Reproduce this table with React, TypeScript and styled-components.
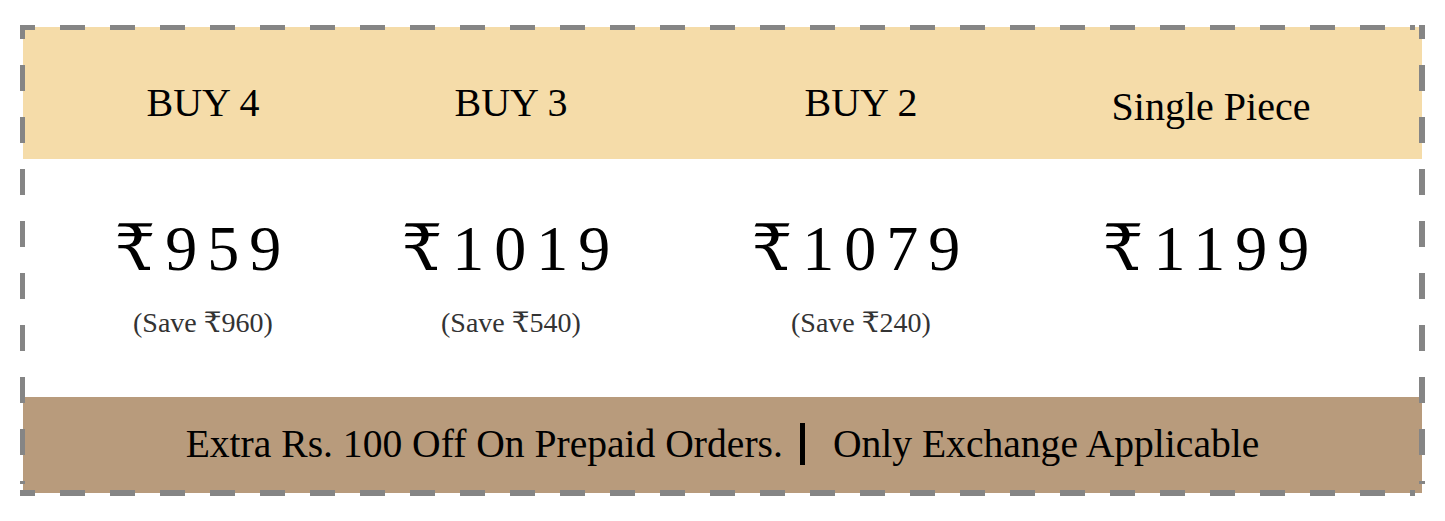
import React from 'react';
import styled, { createGlobalStyle } from 'styled-components';

const offers = [
  { id: '4', title: 'BUY 4', price: '₹959', save: '(Save ₹960)', shift: 0 },
  { id: '3', title: 'BUY 3', price: '₹1019', save: '(Save ₹540)', shift: 0 },
  { id: '2', title: 'BUY 2', price: '₹1079', save: '(Save ₹240)', shift: 0 },
  { id: '1', title: 'Single Piece', price: '₹1199', save: '', shift: 4 },
];

function App() {
  return (
    <>
      <GlobalStyle />
      <SPage>
        <SFrame>
          <SHeader>
            {offers.map(offer => (
              <SHeaderCell key={offer.id} $shift={offer.shift}>
                {offer.title}
              </SHeaderCell>
            ))}
          </SHeader>
          <SPriceRow>
            {offers.map(offer => (
              <SPriceCell key={offer.id}>
                <SPrice>{offer.price}</SPrice>
                {offer.save && <SSave>{offer.save}</SSave>}
              </SPriceCell>
            ))}
          </SPriceRow>
          <SFooter>
            <span>Extra Rs. 100 Off On Prepaid Orders.</span>
            <SDivider />
            <span>Only Exchange Applicable</span>
          </SFooter>
        </SFrame>
      </SPage>
    </>
  );
}

export default App;

const GlobalStyle = createGlobalStyle`
  html, body {
    margin: 0;
    padding: 0;
    background: #fff;
  }
  body {
    font-family: "Liberation Serif", "DejaVu Serif", serif;
    color: #000;
  }
`;

const SPage = styled.div`
  width: 1445px;
  height: 521px;
  padding: 25px 0 0 20px;
  box-sizing: border-box;
`;

// dashed frame drawn over the edges of the panels
const SFrame = styled.div`
  position: relative;
  width: 1405px;
  height: 471px;
  box-sizing: border-box;
  padding: 2px 3px 3px 3px;
  display: flex;
  flex-direction: column;

  &::after {
    content: '';
    position: absolute;
    inset: 0;
    pointer-events: none;
    background:
      repeating-linear-gradient(to right, #858585 0 25px, transparent 25px 50px) -10px 0 / 100% 5px no-repeat,
      repeating-linear-gradient(to right, #858585 0 25px, transparent 25px 50px) -10px 100% / 100% 6px no-repeat,
      repeating-linear-gradient(to bottom, #858585 0 26px, transparent 26px 52px) 0 -12px / 5px 100% no-repeat,
      repeating-linear-gradient(to bottom, #858585 0 26px, transparent 26px 52px) 100% -12px / 6px 100% no-repeat;
  }
`;

const SColumns = styled.div`
  display: grid;
  grid-template-columns: 266px 350px 350px 350px;
  padding-left: 47px;
`;

const SHeader = styled(SColumns)`
  height: 132px;
  background: #f5dca9;
  box-sizing: border-box;
  padding-top: 56px;
`;

const SHeaderCell = styled.div<{ $shift: number }>`
  text-align: center;
  font-size: 40px;
  line-height: 40px;
  margin-top: ${props => props.$shift}px;
  white-space: nowrap;
`;

const SPriceRow = styled(SColumns)`
  height: 238px;
  box-sizing: border-box;
  padding-top: 58px;
  align-items: start;
`;

const SPriceCell = styled.div`
  display: flex;
  flex-direction: column;
  align-items: center;
`;

const SPrice = styled.div`
  font-size: 64px;
  line-height: 64px;
  letter-spacing: 10px;
  white-space: nowrap;
`;

const SSave = styled.div`
  margin-top: 28px;
  font-size: 28px;
  line-height: 28px;
  color: #333;
  white-space: nowrap;
`;

const SFooter = styled.div`
  flex: 1;
  background: #b89b7c;
  display: flex;
  justify-content: center;
  align-items: center;
  font-size: 39.6px;
  line-height: 40px;
  padding-bottom: 2px;
`;

const SDivider = styled.span`
  width: 5px;
  height: 42px;
  margin: 0 28px 0 17px;
  background: #000;
`;
